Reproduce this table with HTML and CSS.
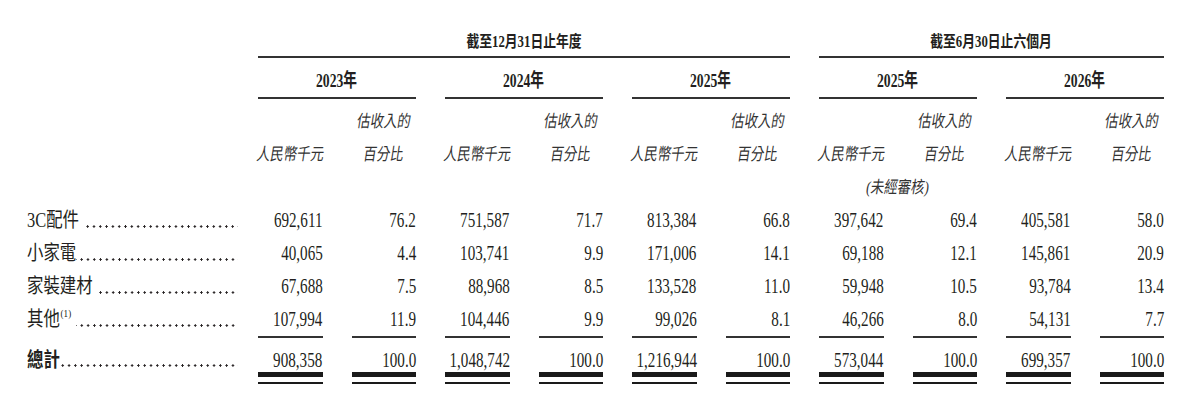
FILE: index.html
```html
<!DOCTYPE html>
<html lang="zh-Hant">
<head>
<meta charset="utf-8">
<title>收入明細</title>
<link rel="stylesheet" href="styles.css">
</head>
<body>
<div class="sheet">
  <!-- row 1: periods -->
  <div class="cell"></div>
  <div class="cell period p-year"><span>截至12月31日止年度</span></div>
  <div class="cell period p-half"><span>截至6月30日止六個月</span></div>

  <!-- row 2: years -->
  <div class="cell"></div>
  <div class="cell year"><span>2023年</span></div>
  <div class="cell year"><span>2024年</span></div>
  <div class="cell year"><span>2025年</span></div>
  <div class="cell year"><span>2025年</span></div>
  <div class="cell year"><span>2026年</span></div>

  <!-- row 3 -->
  <div class="cell"></div>
  <div class="cell"></div><div class="cell sub sub-top"><span>估收入的</span></div>
  <div class="cell"></div><div class="cell sub sub-top"><span>估收入的</span></div>
  <div class="cell"></div><div class="cell sub sub-top"><span>估收入的</span></div>
  <div class="cell"></div><div class="cell sub sub-top"><span>估收入的</span></div>
  <div class="cell"></div><div class="cell sub sub-top"><span>估收入的</span></div>

  <!-- row 4 -->
  <div class="cell"></div>
  <div class="cell sub"><span>人民幣千元</span></div><div class="cell sub"><span>百分比</span></div>
  <div class="cell sub"><span>人民幣千元</span></div><div class="cell sub"><span>百分比</span></div>
  <div class="cell sub"><span>人民幣千元</span></div><div class="cell sub"><span>百分比</span></div>
  <div class="cell sub"><span>人民幣千元</span></div><div class="cell sub"><span>百分比</span></div>
  <div class="cell sub"><span>人民幣千元</span></div><div class="cell sub"><span>百分比</span></div>

  <!-- row 5 -->
  <div class="cell"></div>
  <div class="cell"></div><div class="cell"></div>
  <div class="cell"></div><div class="cell"></div>
  <div class="cell"></div><div class="cell"></div>
  <div class="cell sub span2"><span>(未經審核)</span></div>
  <div class="cell"></div><div class="cell"></div>

  <!-- data rows -->
  <div class="cell label"><div class="lbl-in"><span class="name gap">3C配件</span><span class="dots"></span></div></div>
  <div class="cell num"><span>692,611</span></div><div class="cell num"><span>76.2</span></div>
  <div class="cell num"><span>751,587</span></div><div class="cell num"><span>71.7</span></div>
  <div class="cell num"><span>813,384</span></div><div class="cell num"><span>66.8</span></div>
  <div class="cell num"><span>397,642</span></div><div class="cell num"><span>69.4</span></div>
  <div class="cell num"><span>405,581</span></div><div class="cell num"><span>58.0</span></div>

  <div class="cell label"><div class="lbl-in"><span class="name">小家電</span><span class="dots"></span></div></div>
  <div class="cell num"><span>40,065</span></div><div class="cell num"><span>4.4</span></div>
  <div class="cell num"><span>103,741</span></div><div class="cell num"><span>9.9</span></div>
  <div class="cell num"><span>171,006</span></div><div class="cell num"><span>14.1</span></div>
  <div class="cell num"><span>69,188</span></div><div class="cell num"><span>12.1</span></div>
  <div class="cell num"><span>145,861</span></div><div class="cell num"><span>20.9</span></div>

  <div class="cell label"><div class="lbl-in"><span class="name gap">家裝建材</span><span class="dots"></span></div></div>
  <div class="cell num"><span>67,688</span></div><div class="cell num"><span>7.5</span></div>
  <div class="cell num"><span>88,968</span></div><div class="cell num"><span>8.5</span></div>
  <div class="cell num"><span>133,528</span></div><div class="cell num"><span>11.0</span></div>
  <div class="cell num"><span>59,948</span></div><div class="cell num"><span>10.5</span></div>
  <div class="cell num"><span>93,784</span></div><div class="cell num"><span>13.4</span></div>

  <div class="cell label"><div class="lbl-in"><span class="name gap">其他<sup>(1)</sup></span><span class="dots"></span></div></div>
  <div class="cell num"><span>107,994</span></div><div class="cell num"><span>11.9</span></div>
  <div class="cell num"><span>104,446</span></div><div class="cell num"><span>9.9</span></div>
  <div class="cell num"><span>99,026</span></div><div class="cell num"><span>8.1</span></div>
  <div class="cell num"><span>46,266</span></div><div class="cell num"><span>8.0</span></div>
  <div class="cell num"><span>54,131</span></div><div class="cell num"><span>7.7</span></div>

  <!-- total -->
  <div class="cell label total-label"><div class="lbl-in"><span class="name">總計</span><span class="dots"></span></div></div>
  <div class="cell tot"><div class="tot-in"><span>908,358</span></div></div><div class="cell tot"><div class="tot-in"><span>100.0</span></div></div>
  <div class="cell tot"><div class="tot-in"><span>1,048,742</span></div></div><div class="cell tot"><div class="tot-in"><span>100.0</span></div></div>
  <div class="cell tot"><div class="tot-in"><span>1,216,944</span></div></div><div class="cell tot"><div class="tot-in"><span>100.0</span></div></div>
  <div class="cell tot"><div class="tot-in"><span>573,044</span></div></div><div class="cell tot"><div class="tot-in"><span>100.0</span></div></div>
  <div class="cell tot"><div class="tot-in"><span>699,357</span></div></div><div class="cell tot"><div class="tot-in"><span>100.0</span></div></div>
</div>
</body>
</html>
```
FILE: styles.css
```css
* {
  box-sizing: border-box;
  margin: 0;
  padding: 0;
}

html, body {
  background: #ffffff;
}

body {
  margin: 0;
  font-family: "Liberation Serif", "Noto Sans CJK TC", serif;
  color: #231f20;
}

.sheet {
  display: grid;
  grid-template-columns: 202px repeat(10, 64.5px);
  grid-template-rows: 58px 41px 39px 33px 33px 33px 33px 33px 33px auto;
  column-gap: 29px;
  padding-left: 27px;
  width: 1200px;
}

.cell {
  display: flex;
  min-width: 0;
  white-space: nowrap;
}

.cell > span {
  display: inline-block;
  flex: none;
}

/* period headers */
.period {
  justify-content: center;
  padding-top: 32px;
  font-weight: bold;
  font-size: 16px;
  line-height: 20px;
  border-bottom: 2px solid #333333;
}

.period > span {
  transform: scaleX(0.8);
}

.p-year {
  grid-column: span 6;
}

.p-half {
  grid-column: span 4;
}

/* year headers */
.year {
  grid-column: span 2;
  justify-content: center;
  padding-top: 12px;
  font-weight: bold;
  font-size: 19px;
  line-height: 22px;
  border-bottom: 2px solid #333333;
}

.year > span {
  transform: scaleX(0.72);
}

/* sub headers (italic) */
.sub {
  justify-content: center;
  font-size: 17px;
  line-height: 33px;
  color: #333333;
}

.sub > span {
  transform: scaleX(0.79) skewX(-11deg);
}

.sub-top {
  padding-top: 6px;
}

.span2 {
  grid-column: span 2;
}

/* labels */
.label {
  font-size: 20px;
  line-height: 33px;
}

.lbl-in {
  display: flex;
  flex: none;
  width: 257px;
  transform: scaleX(0.82);
  transform-origin: left center;
}

.name {
  flex: none;
}

.name.gap {
  margin-right: 6px;
}

.name sup {
  font-size: 11px;
  line-height: 0;
  vertical-align: 9px;
  margin-left: 1px;
}

.dots {
  flex: 1;
  background-image: radial-gradient(circle, #231f20 1.05px, rgba(35, 31, 32, 0) 1.45px);
  background-size: 7.7px 3px;
  background-repeat: repeat-x;
  background-position: right 2px top 21px;
}

.total-label {
  padding-top: 12px;
  line-height: 24px;
  font-weight: bold;
}

.total-label .dots {
  background-position: right 2px top 16px;
}

/* numbers */
.num {
  justify-content: flex-end;
  font-size: 21px;
  line-height: 33px;
}

.num > span {
  transform: scaleX(0.72);
  transform-origin: right center;
}

.tot {
  display: block;
  border-top: 2px solid #333333;
  border-bottom: 2px solid #1a1a1a;
  padding: 10px 0 5px;
}

.tot-in {
  display: flex;
  justify-content: flex-end;
  border-bottom: 5px solid #1a1a1a;
  font-size: 21px;
  line-height: 24px;
}

.tot-in > span {
  display: inline-block;
  flex: none;
  white-space: nowrap;
  transform: scaleX(0.72);
  transform-origin: right center;
}
```
